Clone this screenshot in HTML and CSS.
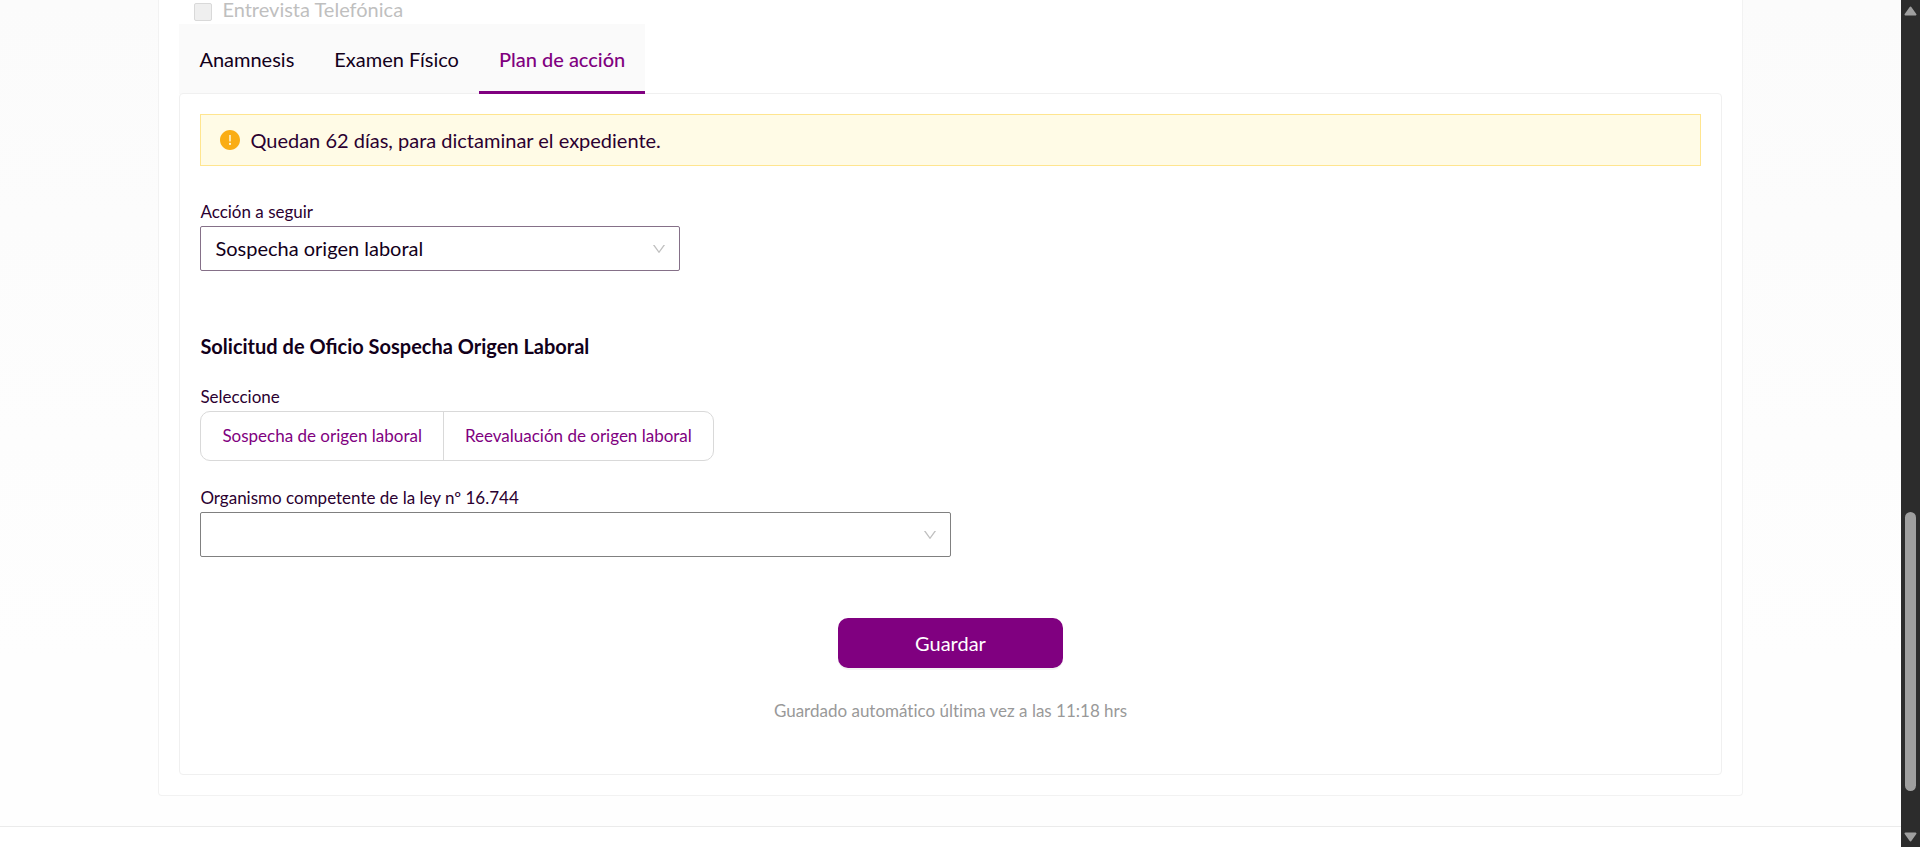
FILE: index.html
```html
<!DOCTYPE html>
<html lang="es">
<head>
<meta charset="utf-8">
<title>Plan de acción</title>
<link rel="stylesheet" href="styles.css">
</head>
<body>
<div class="viewport">
  <div class="page">
    <main class="content">
      <section class="card">
        <label class="check"><input type="checkbox" disabled><span>Entrevista Telefónica</span></label>
        <nav class="tabs" role="tablist">
          <button class="tab" type="button" role="tab">Anamnesis</button>
          <button class="tab" type="button" role="tab">Examen Físico</button>
          <button class="tab tab-active" type="button" role="tab" aria-selected="true">Plan de acción</button>
        </nav>
        <form class="panel">
          <div class="alert" role="alert">
            <svg class="alert-icon" viewBox="64 64 896 896" aria-hidden="true"><path d="M512 64C264.600 64 64 264.600 64 512s200.600 448 448 448 448-200.600 448-448S759.400 64 512 64zm-32 232c0-4.400 3.600-8 8-8h48c4.400 0 8 3.600 8 8v272c0 4.400-3.600 8-8 8h-48c-4.400 0-8-3.600-8-8V296zm32 440a48 48 0 0 1 0-96 48 48 0 0 1 0 96z"/></svg>
            <span>Quedan 62 días, para dictaminar el expediente.</span>
          </div>

          <div class="field field-action">
            <label for="accion">Acción a seguir</label>
            <div class="select select-tinted">
              <select id="accion"><option>Sospecha origen laboral</option></select>
              <svg class="chevron" viewBox="64 64 896 896" aria-hidden="true"><path d="M884 256h-75c-5.100 0-9.900 2.500-12.900 6.600L512 654.200 227.900 262.600c-3-4.100-7.800-6.600-12.900-6.600h-75c-6.500 0-10.300 7.400-6.500 12.700l352.600 486.100c12.800 17.600 39 17.600 51.700 0l352.600-486.100c3.900-5.300.1-12.700-6.400-12.700z"/></svg>
            </div>
          </div>

          <h2 class="title">Solicitud de Oficio Sospecha Origen Laboral</h2>

          <fieldset class="field field-choice">
            <legend>Seleccione</legend>
            <div class="radios">
              <label class="radio"><input type="radio" name="tipo"><span>Sospecha de origen laboral</span></label>
              <label class="radio"><input type="radio" name="tipo"><span>Reevaluación de origen laboral</span></label>
            </div>
          </fieldset>

          <div class="field field-organism">
            <label for="organismo">Organismo competente de la ley nº 16.744</label>
            <div class="select">
              <select id="organismo"><option></option></select>
              <svg class="chevron" viewBox="64 64 896 896" aria-hidden="true"><path d="M884 256h-75c-5.100 0-9.900 2.500-12.900 6.600L512 654.200 227.900 262.600c-3-4.100-7.800-6.600-12.900-6.600h-75c-6.500 0-10.300 7.400-6.500 12.700l352.600 486.100c12.800 17.600 39 17.600 51.700 0l352.600-486.100c3.900-5.300.1-12.700-6.400-12.700z"/></svg>
            </div>
          </div>

          <div class="actions">
            <button class="save" type="button">Guardar</button>
            <p class="saved">Guardado automático última vez a las 11:18 hrs</p>
          </div>
        </form>
      </section>
    </main>
    <footer class="footer"></footer>
  </div>
  <div class="scrollbar" aria-hidden="true">
    <svg class="arrow" viewBox="0 0 13 10"><path d="M6.500 1.500L11.500 8.500H1.500z"/></svg>
    <div class="track"><div class="thumb"></div></div>
    <svg class="arrow" viewBox="0 0 13 10"><path d="M6.500 8.500L11.500 1.500H1.500z"/></svg>
  </div>
</div>
</body>
</html>
```

FILE: styles.css
```css
*, *::before, *::after { box-sizing: border-box; }

body {
  margin: 0;
  font-family: Lato, "Liberation Sans", sans-serif;
  font-size: 20px;
  line-height: 30px;
  font-variant-ligatures: none;
  color: #2b0030;
  background: #fff;
}

button, select, input { font: inherit; color: inherit; }

.viewport { display: flex; min-height: 100vh; }

.page { flex: 1; display: flex; flex-direction: column; min-width: 0; }

.content {
  flex: 1;
  padding: 0 8.3333% 30px;
  background: linear-gradient(#fbfbfb, #fefefe 80%, #fefefe);
}

.card {
  padding: 0 20px 20px;
  background: #fff;
  border: 1px solid #f2f2f2;
  border-top: 0;
  border-radius: 0 0 4px 4px;
}

.check {
  display: flex;
  align-items: flex-end;
  gap: 10px;
  height: 24px;
  padding: 0 0 3px 15px;
  color: #bfbfbf;
  line-height: 22px;
}

.check input {
  appearance: none;
  width: 18px;
  height: 18px;
  margin: 0;
  background: #efefef;
  border: 1px solid #d9d9d9;
  border-radius: 2px;
}

.check span { padding-bottom: 1px; }

.tabs { display: flex; width: fit-content; background: #fafafa; }

.tab {
  height: 70px;
  padding: 3px 20px 0;
  border: 0;
  border-bottom: 3px solid transparent;
  background: none;
  color: #12001a;
}

.tab-active { color: #800080; border-bottom-color: #800080; font-weight: 500; }

.panel {
  margin-top: -1px;
  padding: 20px 20px 48px;
  border: 1px solid #f0f0f0;
  border-radius: 4px;
}

.alert {
  display: flex;
  align-items: center;
  gap: 10px;
  height: 52px;
  padding: 0 19px;
  background: #fffbe6;
  border: 1px solid #ffe58f;
}

.alert-icon { width: 20px; height: 20px; fill: #faad14; }

.field { margin: 0; padding: 0; border: 0; font-size: 17px; }
.field > label, .field > legend { display: block; padding: 0; line-height: 28px; }

.field-action { width: 480px; margin-top: 32px; }
.field-choice { margin-top: 22px; }
.field-organism { width: 50%; margin-top: 23px; }

.select { display: grid; align-items: center; }

.select select {
  grid-area: 1 / 1;
  appearance: none;
  width: 100%;
  height: 45px;
  padding: 0 40px 2px 14px;
  background: #fff;
  border: 1px solid #808080;
  border-radius: 2px;
  font-size: 20px;
  color: #12001a;
}

.select-tinted select { border-color: #857088; }

.chevron {
  grid-area: 1 / 1;
  justify-self: end;
  width: 14px;
  height: 14px;
  margin-right: 14px;
  fill: #bfbfbf;
  pointer-events: none;
}

.title {
  margin: 60px 0 0;
  font-size: 20px;
  line-height: 30px;
  font-weight: 700;
  font-variant-ligatures: normal;
  color: #12001a;
}

.radios {
  display: flex;
  width: fit-content;
  height: 50px;
  border: 1px solid #d9d9d9;
  border-radius: 10px;
  color: #800080;
}

.radio { display: flex; align-items: center; padding: 0 21px; cursor: pointer; }
.radio + .radio { border-left: 1px solid #d9d9d9; }
.radio input { appearance: none; width: 0; height: 0; margin: 0; }

.actions { display: flex; flex-direction: column; align-items: center; padding-top: 61px; }

.save {
  width: 15%;
  height: 50px;
  border: 0;
  border-radius: 10px;
  background: #800080;
  color: #fff;
  box-shadow: 0 2px 0 rgba(0, 0, 0, 0.045);
}

.saved { margin: 28px 0 0; font-size: 17px; color: #999; }

.footer { height: 21px; border-top: 1px solid #ebebeb; }

.scrollbar {
  display: flex;
  flex-direction: column;
  align-items: center;
  width: 19px;
  padding: 6px 0 5px;
  background: #2c2c2c;
}

.arrow {
  width: 13px;
  height: 10px;
  fill: #9f9f9f;
  stroke: #9f9f9f;
  stroke-width: 2;
  stroke-linejoin: round;
}

.track {
  flex: 1;
  display: flex;
  flex-direction: column;
  justify-content: flex-end;
  padding-bottom: 41px;
}

.thumb { width: 11px; height: 36%; background: #9f9f9f; border-radius: 6px; }
```
